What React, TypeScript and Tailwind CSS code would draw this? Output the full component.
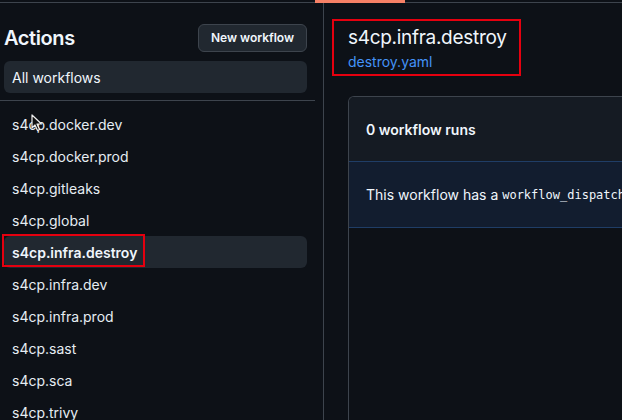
import React from "react";

const workflows = [
  "s4cp.docker.dev",
  "s4cp.docker.prod",
  "s4cp.gitleaks",
  "s4cp.global",
  "s4cp.infra.destroy",
  "s4cp.infra.dev",
  "s4cp.infra.prod",
  "s4cp.sast",
  "s4cp.sca",
  "s4cp.trivy",
];

export default function App() {
  const selected = "s4cp.infra.destroy";

  return (
    <div className="w-[622px] h-[420px] bg-[#0d1117] text-[#f0f6fc] overflow-hidden relative font-['Inter','Liberation_Sans',sans-serif]">
      {/* tab strip underline */}
      <div className="flex h-[3px]">
        <div className="w-[315px] border-b border-[#3d444d]" />
        <div className="w-[90px] bg-[#f78166]" />
        <div className="flex-1 border-b border-[#3d444d]" />
      </div>

      <div className="flex h-[417px]">
        {/* Sidebar */}
        <aside className="w-[324px] shrink-0 border-r border-[#3d444d]">
          <div className="w-[315px]">
            <div className="flex items-center justify-between pl-1 pr-2 pt-[21px]">
              <h2 className="text-[20px] leading-[28px] font-semibold tracking-[-0.4px]">Actions</h2>
              <button className="h-[28px] px-[12px] rounded-md bg-[#212830] border border-[#3d444d] text-[12px] font-semibold text-[#f0f6fc]">
                New workflow
              </button>
            </div>
            <div className="pl-1 pr-2 mt-[9px]">
              <div className="h-[32px] rounded-md bg-[#212830] flex items-center px-2 text-[14px]">
                All workflows
              </div>
            </div>
            <div className="mt-[7px] border-t border-[#3d444d]" />
            <ul className="pl-1 pr-2 mt-[7px]">
              {workflows.map((w) => {
                const active = w === selected;
                return (
                  <li
                    key={w}
                    className={`relative h-[32px] rounded-md flex items-center px-2 text-[14px] ${
                      active ? "bg-[#212830] font-semibold text-[#f0f6fc]" : "text-[#e6edf3]"
                    }`}
                  >
                    {w}
                    {active && (
                      <span className="absolute left-[-2px] top-[-2px] w-[143px] h-[33px] border-2 border-[#e5000f]" />
                    )}
                  </li>
                );
              })}
            </ul>
          </div>
        </aside>

        {/* Main */}
        <main className="flex-1 pl-6 min-w-0">
          <div className="relative pt-[21px]">
            <h1 className="text-[19px] leading-[28px] font-normal tracking-[-0.3px] whitespace-nowrap">s4cp.infra.destroy</h1>
            <a className="block text-[14px] leading-[20px] text-[#4493f8]">destroy.yaml</a>
            <span className="absolute left-[-16px] top-[16px] w-[189px] h-[57px] border-2 border-[#e5000f]" />
          </div>

          <div className="mt-[24px] w-[320px] h-[340px] border-l border-t border-[#3d444d] rounded-tl-md overflow-hidden">
            <div className="h-[64px] bg-[#151b23] flex items-center px-[17px] text-[14px] font-semibold">
              0 workflow runs
            </div>
            <div className="h-[67px] bg-[#121d2f] border-y border-[#1f3d66] flex items-center px-[17px] text-[14px] whitespace-nowrap text-[#f0f6fc]">
              This workflow has a&nbsp;
              <code className="text-[12px] font-['DejaVu_Sans_Mono','Liberation_Mono',monospace]">workflow_dispatch</code>
            </div>
          </div>
        </main>
      </div>

      {/* mouse cursor */}
      <svg className="absolute left-[31px] top-[114px]" width="12" height="18" viewBox="0 0 12 18">
        <path d="M1 1 L1 14 L4 11 L6.5 16.5 L8.5 15.5 L6 10 L10.5 10 Z" fill="#111" stroke="#eee" strokeWidth="1.2" strokeLinejoin="round" />
      </svg>
    </div>
  );
}
